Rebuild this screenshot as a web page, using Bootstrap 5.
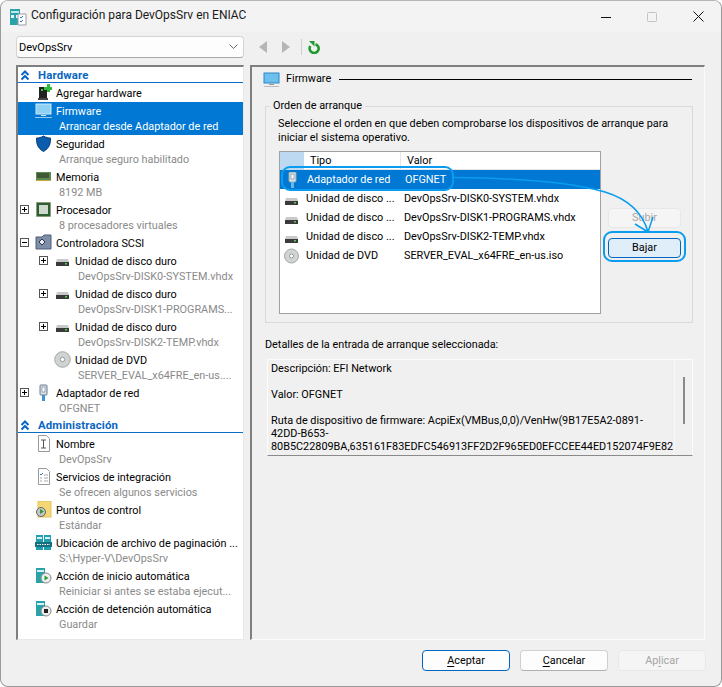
<!DOCTYPE html>
<html lang="es"><head><meta charset="utf-8"><title>Configuración</title>
<link rel="stylesheet" href="https://cdn.jsdelivr.net/npm/bootstrap@5.3.0/dist/css/bootstrap.min.css">
<style>
html,body{height:100%;margin:0;background:#fff}
body{font-family:Roboto,"Liberation Sans",sans-serif;font-size:10.85px;line-height:16.5px;color:#000;overflow:hidden}
svg{display:block;flex:none}
.win{position:relative;width:722px;height:687px;background:#f0f0f0;border:1px solid #9a9a9a;border-top-color:#b5b5b5;border-radius:8px;overflow:hidden}
.tbar{height:31px;background:#f3f3f3;padding-left:9px}
.tbar .ttl{font-size:12px;margin-left:4px;margin-top:-2px;color:#1a1a1a}
.ctl{width:46px;display:flex;justify-content:center;align-items:center;height:30px}
.tool{height:33px;padding:0 0 3px 15px}
.combo{width:228px;height:22px;background:#fdfdfd;border:1px solid #d4d4d4;border-bottom-color:#a8a8a8;border-radius:4px;padding:0 5px 0 2px;font-size:11px}
.combo span{padding-top:2px}
.mainp{height:575px;padding-left:15px;gap:6px}
.tree{width:228px;background:#fff;border:1px solid #e8e8e8;border-top:2px solid #7f7f7f;border-left:2px solid #7f7f7f;padding-top:1px;overflow:hidden}
.sect{height:15px;border-bottom:1px solid #0a6cc6;color:#0a66c2;font-weight:700;font-size:11.4px;letter-spacing:.15px;padding-left:2px;line-height:14px}
.sect svg{margin-right:7px}
.it{display:flex;height:33px;padding-top:1px}
.it.one{height:17px;padding-top:0}
.it.sc{height:18px;padding-top:1px}
.it .exp{flex:none;width:15px;margin-left:2px;padding-top:2px}
.it .ic{flex:none;width:17px;margin-right:4px;margin-top:-1px}
.it.l1{padding-left:19px}
.it .tt{white-space:nowrap;line-height:16.5px;padding-top:1px}
.it .st{white-space:nowrap;color:#8a8a8a;padding-left:3px;line-height:15.5px;margin-top:-1.5px}
.it.sel{background:#0078d4;color:#fff}
.it.sel .st{color:#fff}
.pm{width:9px;height:9px;border:1px solid #555;background:#fff;display:block;position:relative;margin-top:1px}
.pm:before{content:"";position:absolute;left:1px;right:1px;top:3px;height:1px;background:#000}
.pm.p:after{content:"";position:absolute;top:1px;bottom:1px;left:3px;width:1px;background:#000}
.right{width:455px;border-top:2px solid #7f7f7f;border-left:2px solid #7f7f7f;border-right:1px solid #fbfbfb;border-bottom:1px solid #fbfbfb;padding:3px 12px 0 11px}
.phead{height:18px;gap:6px}
.phead i{flex:1;height:1px;background:#000;margin-left:2px;display:block}
.gbox{margin:11px 0 0 2px;width:428px;height:224px;border:1px solid #d9d9d9;padding:0 12px;min-width:0}
.gbox legend{float:none;width:auto;font-size:10.85px;line-height:14px;margin:0 0 0 -8px;padding:0 3px}
.lead-t{line-height:14px;margin-top:4px;white-space:nowrap}
.blist{width:322px;height:163px;background:#fff;border:1px solid #a0a0a0;margin:6px 0 0 1px;flex:none}
.bhead{height:18px;line-height:17px}
.bhead span{display:block;height:18px;border-right:1px solid #e5e5e5;border-bottom:1px solid #e5e5e5}
.bhead .c0{width:24px;background:#bcd9f1;border-color:#bcd9f1}.bhead .c1{width:97px;padding-left:6px}.bhead .c2{flex:1;border-right:0;padding-left:6px}
.brow{height:19px;display:flex;align-items:center;white-space:nowrap;padding-left:4px}
.brow span{margin-top:2px}
.brow .b1{width:98px;margin-left:7px;flex:none}
.brow.sel{background:#0078d4;color:#fff;padding-left:5px}
.btnw{padding-left:7px;padding-top:63px;gap:10px}
.wbtn{--bs-btn-padding-y:0;--bs-btn-padding-x:0;--bs-btn-font-size:10.85px;--bs-btn-line-height:18px;--bs-btn-border-radius:4px;width:73px;height:20px;background:#fdfdfd;border:1px solid #d0d0d0;border-bottom-color:#b0b0b0;color:#000}
.wbtn:disabled{background:#f5f5f5;border-color:#e8e8e8;color:#a5a5a5;opacity:1}
.wbtn.def{background:#e0eefa;border-color:#0067c0}
.dlab{margin:14px 0 6px;padding-left:2px;line-height:16px}
.dbox{width:426px;height:97px;margin-left:4px;border:1px solid #fbfbfb;border-bottom:1px solid #8a8a8a;position:relative;padding:2px 0 0 3px;overflow:hidden}
.dbox p{margin:0;line-height:13px;white-space:pre}
.sbar{position:absolute;right:0;top:0;bottom:0;width:18px;border-left:1px solid #f8f8f8}
.sbar i{position:absolute;left:8px;top:17px;height:47px;width:2px;background:#8a8a8a;display:block}
.foot{padding:10px 0 0 421px;gap:10px}
.foot .wbtn{width:88px;height:21px;--bs-btn-line-height:19px}
.foot .pri{border-color:#0067c0;background:#fdfdfd}
.foot u{text-underline-offset:2px}
.ring{position:absolute;border:2px solid #0a9cf0;pointer-events:none}
.r1{left:280px;top:165px;width:173px;height:25px;border-radius:9px}
.r2{left:602px;top:230px;width:83px;height:31px;border-radius:9px}
.ovl{position:absolute;left:0;top:0;pointer-events:none}
.sep{width:1px;height:16px;background:#d0d0d0;margin:0 6px 0 10px}
.nb{margin-left:14px}.nf{margin-left:13px}
</style></head><body>
<div class="win">
 <div class="tbar d-flex align-items-center">
  <svg width="17" height="18" viewBox="0 0 17 18"><rect x="0" y="1" width="10" height="16" fill="#2aa3a8"/><rect x="1" y="3" width="8" height="2" fill="#bfe6e8"/><rect x="1" y="7" width="3" height="3" fill="#e8fafa"/><rect x="6" y="7" width="3" height="3" fill="#e8fafa"/><path d="M8 6h8v11H8z" fill="#fff" stroke="#9aa0a6"/><path d="M10 9l1 1 2-2M10 13l1 1 2-2" stroke="#2f77c8" fill="none"/></svg>
  <span class="ttl flex-grow-1">Configuración para DevOpsSrv en ENIAC</span>
  <span class="ctl"><svg width="10" height="10"><path d="M0 5.500h10" stroke="#111"/></svg></span>
  <span class="ctl"><svg width="10" height="10"><rect x=".5" y=".5" width="9" height="9" rx="1" fill="none" stroke="#c4c4c4"/></svg></span>
  <span class="ctl"><svg width="11" height="11"><path d="M.5.500l10 10M10.500.500l-10 10" stroke="#111"/></svg></span>
 </div>
 <div class="tool d-flex align-items-center">
  <div class="combo d-flex align-items-center justify-content-between"><span>DevOpsSrv</span><svg width="9" height="6"><path d="M.5.500L4.500 4.500 8.500.500" fill="none" stroke="#666"/></svg></div>
  <svg class="nb" width="10" height="12"><path d="M9 0v12L1 6z" fill="#b5b5b5"/></svg>
  <svg class="nf" width="10" height="12"><path d="M1 0v12l8-6z" fill="#b5b5b5"/></svg>
  <i class="d-block sep"></i>
  <svg width="13" height="13" viewBox="0 0 13 13"><path d="M7.500 3.200A4.500 4.500 0 1 1 2.400 5" fill="none" stroke="#1f9a2e" stroke-width="2.600"/><path d="M1 0h5.500v5.500z" fill="#1f9a2e"/></svg>
 </div>
 <div class="mainp d-flex">
  <div class="tree">
   <div class="sect d-flex align-items-center"><svg width="11" height="11" viewBox="0 0 11 11"><path d="M1.500 5L5 1.500 8.500 5M1.500 9.500L5 6 8.500 9.500" fill="none" stroke="#0a66c2" stroke-width="2"/></svg><span>Hardware</span></div>
   <div class="it one" style="margin-top:2px"><span class="exp"></span><span class="ic"><svg width="17" height="17" viewBox="0 0 17 17"><rect x="4" y="3" width="8" height="13" fill="#222"/><rect x="3" y="14" width="10" height="2" fill="#444"/><rect x="6" y="5" width="2" height="2" fill="#2ecc40"/><path d="M9 3h3V0h3v3h2v3h-2v2h-3V6H9z" fill="#2dbb3a"/></svg></span><div class="tt">Agregar hardware</div></div>
   <div class="it sel"><span class="exp"></span><span class="ic"><svg width="17" height="17" viewBox="0 0 17 17"><rect x="1" y="2" width="15" height="10" fill="#8fd0f5" stroke="#cfeafb"/><rect x="6" y="13" width="5" height="1" fill="#cfeafb"/><rect x="0" y="15" width="17" height="1" fill="#9cc8ea"/></svg></span><div><div class="tt">Firmware</div><div class="st">Arrancar desde Adaptador de red</div></div></div>
   <div class="it"><span class="exp"></span><span class="ic"><svg width="17" height="17" viewBox="0 0 17 17"><path d="M8.500 1C6 2.500 4 3 1.500 3c0 6 1 10 7 13.500C14.500 13 15.500 9 15.500 3 13 3 11 2.500 8.500 1z" fill="#0b5cad" stroke="#083e7c"/></svg></span><div><div class="tt">Seguridad</div><div class="st">Arranque seguro habilitado</div></div></div>
   <div class="it"><span class="exp"></span><span class="ic"><svg width="17" height="17" viewBox="0 0 17 17"><rect x="1" y="4" width="15" height="8" fill="#5d8a52"/><path d="M3 5v5M5 5v5M7 5v5M9 5v5M11 5v5M13 5v5" stroke="#2b3a24" stroke-width="1.200"/><rect x="1" y="12" width="15" height="1" fill="#c7a63c"/></svg></span><div><div class="tt">Memoria</div><div class="st">8192 MB</div></div></div>
   <div class="it"><span class="exp"><span class="pm p"></span></span><span class="ic"><svg width="17" height="17" viewBox="0 0 17 17"><rect x="1.500" y="1.500" width="14" height="14" fill="#2f5d34" stroke="#7a8a55" stroke-dasharray="1 1"/><rect x="4" y="4" width="9" height="9" fill="#cfd8cf"/></svg></span><div><div class="tt">Procesador</div><div class="st">8 procesadores virtuales</div></div></div>
   <div class="it one sc"><span class="exp"><span class="pm"></span></span><span class="ic"><svg width="17" height="17" viewBox="0 0 17 17"><path d="M1 3h6l2-2h7v14H1z" fill="#7d8ea8" stroke="#4e5d78"/><path d="M7 5l3 3-3 3-3-3z" fill="#e8edf5" stroke="#334"/></svg></span><div class="tt">Controladora SCSI</div></div>
   <div class="it l1"><span class="exp"><span class="pm p"></span></span><span class="ic"><svg width="17" height="17" viewBox="0 0 17 17"><path d="M3 7h11l1 3H2z" fill="#c9c9c9"/><rect x="2" y="10" width="13" height="4" fill="#3a3a3a"/><rect x="11" y="11" width="2" height="1.500" fill="#4fd34f"/></svg></span><div><div class="tt">Unidad de disco duro</div><div class="st">DevOpsSrv-DISK0-SYSTEM.vhdx</div></div></div>
   <div class="it l1"><span class="exp"><span class="pm p"></span></span><span class="ic"><svg width="17" height="17" viewBox="0 0 17 17"><path d="M3 7h11l1 3H2z" fill="#c9c9c9"/><rect x="2" y="10" width="13" height="4" fill="#3a3a3a"/><rect x="11" y="11" width="2" height="1.500" fill="#4fd34f"/></svg></span><div><div class="tt">Unidad de disco duro</div><div class="st">DevOpsSrv-DISK1-PROGRAMS...</div></div></div>
   <div class="it l1"><span class="exp"><span class="pm p"></span></span><span class="ic"><svg width="17" height="17" viewBox="0 0 17 17"><path d="M3 7h11l1 3H2z" fill="#c9c9c9"/><rect x="2" y="10" width="13" height="4" fill="#3a3a3a"/><rect x="11" y="11" width="2" height="1.500" fill="#4fd34f"/></svg></span><div><div class="tt">Unidad de disco duro</div><div class="st">DevOpsSrv-DISK2-TEMP.vhdx</div></div></div>
   <div class="it l1"><span class="exp"></span><span class="ic"><svg width="17" height="17" viewBox="0 0 17 17"><circle cx="8.500" cy="8.500" r="7.800" fill="#d0d3d3" stroke="#a8a8a8"/><circle cx="8.500" cy="8.500" r="2.200" fill="#fff" stroke="#999"/></svg></span><div><div class="tt">Unidad de DVD</div><div class="st">SERVER_EVAL_x64FRE_en-us....</div></div></div>
   <div class="it"><span class="exp"><span class="pm p"></span></span><span class="ic"><svg width="17" height="17" viewBox="0 0 17 17"><rect x="5" y="1" width="7" height="10" rx="1" fill="#d9e2ea" stroke="#6b7b8c"/><rect x="7" y="3" width="3" height="5" fill="#fff" stroke="#6b7b8c" stroke-width=".6"/><rect x="7" y="11" width="3" height="6" fill="#3f92d2"/></svg></span><div><div class="tt">Adaptador de red</div><div class="st">OFGNET</div></div></div>
   <div class="sect d-flex align-items-center" style="margin-top:1px"><svg width="11" height="11" viewBox="0 0 11 11"><path d="M1.500 5L5 1.500 8.500 5M1.500 9.500L5 6 8.500 9.500" fill="none" stroke="#0a66c2" stroke-width="2"/></svg><span>Administración</span></div>
   <div class="it" style="margin-top:2px"><span class="exp"></span><span class="ic"><svg width="17" height="17" viewBox="0 0 17 17"><path d="M3.500.5h8l3 3v13h-11z" fill="#fff" stroke="#999"/><path d="M6 5h5M8.500 5v8M6 13h5" stroke="#555"/></svg></span><div><div class="tt">Nombre</div><div class="st">DevOpsSrv</div></div></div>
   <div class="it"><span class="exp"></span><span class="ic"><svg width="17" height="17" viewBox="0 0 17 17"><path d="M3.500.5h8l3 3v13h-11z" fill="#fff" stroke="#999"/><path d="M5 6l1 1 2-2" stroke="#2f77c8" fill="none"/><path d="M9 7h4M5 10h2M9 10h4M5 13h2M9 13h4" stroke="#aaa"/></svg></span><div><div class="tt">Servicios de integración</div><div class="st">Se ofrecen algunos servicios</div></div></div>
   <div class="it"><span class="exp"></span><span class="ic"><svg width="17" height="17" viewBox="0 0 17 17"><rect x="3" y="0" width="13" height="16" fill="#f4d775" stroke="#e4c25a"/><circle cx="6" cy="11" r="4.500" fill="#c6c6c6" stroke="#666"/><path d="M5 8l4 2.500-4 2.500z" fill="#2e9b3a"/></svg></span><div><div class="tt">Puntos de control</div><div class="st">Estándar</div></div></div>
   <div class="it"><span class="exp"></span><span class="ic"><svg width="17" height="17" viewBox="0 0 17 17"><rect x="1" y="1" width="7" height="15" fill="#1f9fb0"/><rect x="9" y="1" width="7" height="15" fill="#1f9fb0"/><rect x="2" y="3" width="5" height="2" fill="#d5f3f6"/><rect x="10" y="3" width="5" height="2" fill="#d5f3f6"/><rect x="0" y="8" width="17" height="5" fill="#14707e"/><path d="M2 10.500h13" stroke="#fff" stroke-dasharray="1.500 1"/></svg></span><div><div class="tt">Ubicación de archivo de paginación ...</div><div class="st">S:\Hyper-V\DevOpsSrv</div></div></div>
   <div class="it"><span class="exp"></span><span class="ic"><svg width="17" height="17" viewBox="0 0 17 17"><rect x="1" y="1" width="9" height="15" fill="#2aa3a8"/><rect x="2" y="3" width="7" height="2" fill="#d5f3f6"/><circle cx="11" cy="11" r="5" fill="#eee" stroke="#888"/><path d="M9.500 8.500l4 2.500-4 2.500z" fill="#25a032"/></svg></span><div><div class="tt">Acción de inicio automática</div><div class="st">Reiniciar si antes se estaba ejecut...</div></div></div>
   <div class="it"><span class="exp"></span><span class="ic"><svg width="17" height="17" viewBox="0 0 17 17"><rect x="1" y="1" width="9" height="15" fill="#2aa3a8"/><rect x="2" y="3" width="7" height="2" fill="#d5f3f6"/><circle cx="11" cy="11" r="5" fill="#eee" stroke="#888"/><rect x="9" y="9" width="4" height="4" fill="#222"/></svg></span><div><div class="tt">Acción de detención automática</div><div class="st">Guardar</div></div></div>
  </div>
  <div class="right">
   <div class="phead d-flex align-items-center"><svg width="17" height="17" viewBox="0 0 17 17"><rect x="1" y="2" width="15" height="10" fill="#6cc0ee" stroke="#2d86c7"/><rect x="6" y="13" width="5" height="1" fill="#999"/><rect x="1" y="15" width="15" height="1" fill="#bbb"/></svg><span>Firmware</span><i></i></div>
   <fieldset class="gbox">
    <legend>Orden de arranque</legend>
    <div class="lead-t">Seleccione el orden en que deben comprobarse los dispositivos de arranque para<br>iniciar el sistema operativo.</div>
    <div class="d-flex">
     <div class="blist">
      <div class="bhead d-flex"><span class="c0"></span><span class="c1">Tipo</span><span class="c2">Valor</span></div>
      <div class="brow sel"><svg width="15" height="16" viewBox="0 0 15 16"><rect x="4" y="0" width="7" height="10" rx="1" fill="#dbe5ee" stroke="#8aa"/><rect x="6" y="2" width="3" height="5" fill="#fff" stroke="#678" stroke-width=".6"/><rect x="6" y="10" width="3" height="6" fill="#6ab7ee"/></svg><span class="b1">Adaptador de red</span><span>OFGNET</span></div>
      <div class="brow"><svg width="15" height="16" viewBox="0 0 15 16"><path d="M2 7h11l1 3H1z" fill="#c9c9c9"/><rect x="1" y="10" width="13" height="4" fill="#3a3a3a"/><rect x="10" y="11" width="2" height="1.500" fill="#4fd34f"/></svg><span class="b1">Unidad de disco ...</span><span>DevOpsSrv-DISK0-SYSTEM.vhdx</span></div>
      <div class="brow"><svg width="15" height="16" viewBox="0 0 15 16"><path d="M2 7h11l1 3H1z" fill="#c9c9c9"/><rect x="1" y="10" width="13" height="4" fill="#3a3a3a"/><rect x="10" y="11" width="2" height="1.500" fill="#4fd34f"/></svg><span class="b1">Unidad de disco ...</span><span>DevOpsSrv-DISK1-PROGRAMS.vhdx</span></div>
      <div class="brow"><svg width="15" height="16" viewBox="0 0 15 16"><path d="M2 7h11l1 3H1z" fill="#c9c9c9"/><rect x="1" y="10" width="13" height="4" fill="#3a3a3a"/><rect x="10" y="11" width="2" height="1.500" fill="#4fd34f"/></svg><span class="b1">Unidad de disco ...</span><span>DevOpsSrv-DISK2-TEMP.vhdx</span></div>
      <div class="brow"><svg width="15" height="16" viewBox="0 0 15 16"><circle cx="7.500" cy="8" r="7" fill="#d0d3d3" stroke="#a8a8a8"/><circle cx="7.500" cy="8" r="2" fill="#fff" stroke="#999"/></svg><span class="b1">Unidad de DVD</span><span>SERVER_EVAL_x64FRE_en-us.iso</span></div>
     </div>
     <div class="btnw d-flex flex-column">
      <button class="btn wbtn" disabled>Subir</button>
      <button class="btn wbtn def">Bajar</button>
     </div>
    </div>
   </fieldset>
   <div class="dlab">Detalles de la entrada de arranque seleccionada:</div>
   <div class="dbox"><p>Descripción: EFI Network</p><p> </p><p>Valor: OFGNET</p><p> </p><p>Ruta de dispositivo de firmware: AcpiEx(VMBus,0,0)/VenHw(9B17E5A2-0891-</p><p>42DD-B653-</p><p>80B5C22809BA,635161F83EDFC546913FF2D2F965ED0EFCCEE44ED152074F9E82</p><div class="sbar"><i></i></div></div>
  </div>
 </div>
 <div class="foot d-flex">
  <button class="btn wbtn pri"><u>A</u>ceptar</button>
  <button class="btn wbtn"><u>C</u>ancelar</button>
  <button class="btn wbtn" disabled>Ap<u>l</u>icar</button>
 </div>
 <div class="ring r1"></div><div class="ring r2"></div>
 <svg class="ovl" width="720" height="685"><path d="M453 176.500C510 177 565 180 604 191C630 199 642 213 647 231" fill="none" stroke="#0a9cf0" stroke-width="1.500"/><path d="M634 223L647 231 652 216" fill="none" stroke="#0a9cf0" stroke-width="1.500"/></svg>
</div>
</body></html>
